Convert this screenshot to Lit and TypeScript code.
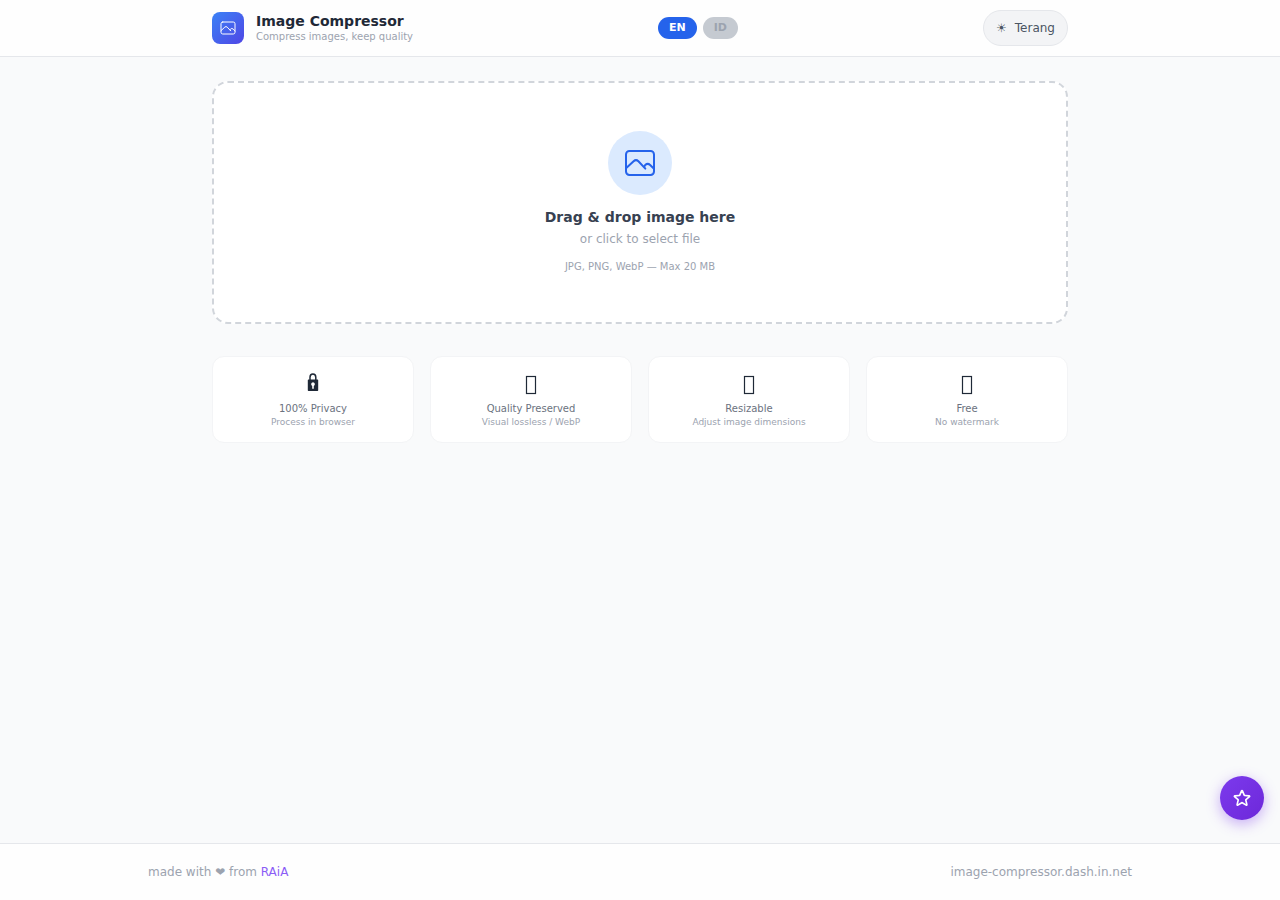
import { LitElement, html, svg, css } from "lit";
import { customElement, state } from "lit/decorators.js";

const photo = svg`
  <rect x="1.5" y="3" width="21" height="18" rx="2.6" />
  <path d="M1.5 16l5.7-5.3a2.6 2.6 0 0 1 3.6 0l5.2 5.5M15.5 15.6c-.5-.8-.3-1.4.4-2.1a2.8 2.8 0 0 1 3.7 0l2.9 2.8" />
`;

const lock = svg`
  <path d="M7 11.5V8.3a2.9 3.3 0 0 1 5.8 0v3.2" stroke-width="1.5" />
  <path fill="currentColor" stroke="none" fill-rule="evenodd"
    d="M5.5 10.5h9a.7.7 0 0 1 .7.7v10.1a.7.7 0 0 1-.7.7h-9a.7.7 0 0 1-.7-.7v-10.1a.7.7 0 0 1 .7-.7zM10 13.300a1.900 1.900 0 0 0-.8 3.600v2.800h1.600v-2.800a1.900 1.900 0 0 0-.8-3.600z" />
`;

const box = svg`<rect x="5.5" y="7.5" width="9" height="17" stroke-width="1.2" stroke-linejoin="miter" />`;

const features = [
  { icon: lock, title: "100% Privacy", note: "Process in browser" },
  { icon: box, title: "Quality Preserved", note: "Visual lossless / WebP" },
  { icon: box, title: "Resizable", note: "Adjust image dimensions" },
  { icon: box, title: "Free", note: "No watermark" },
];

@customElement("app-root")
export class AppRoot extends LitElement {
  @state() private lang = "EN";

  static styles = css`
    :host {
      display: flex;
      flex-direction: column;
      min-height: 100vh;
      background: #f9fafb;
      color: #1f2937;
      font-family: "DejaVu Sans", sans-serif;
      font-size: 12px;
      line-height: 16px;
    }
    * { box-sizing: border-box; }
    p, h1, h2, h3 { margin: 0; }
    button { font: inherit; cursor: pointer; }
    svg { fill: none; stroke: currentColor; stroke-width: 1.5; stroke-linecap: round; stroke-linejoin: round; }
    header { background: #fefefe; border-bottom: 1px solid #e5e7eb; }
    .bar {
      display: flex;
      align-items: center;
      justify-content: space-between;
      max-width: 888px;
      margin: 0 auto;
      padding: 10px 16px;
    }
    .brand { display: flex; align-items: center; gap: 12px; }
    .logo {
      display: grid;
      place-items: center;
      width: 32px;
      height: 32px;
      border-radius: 8px;
      color: #fff;
      background: linear-gradient(135deg, #3b82f6, #4f46e5);
    }
    .logo svg { width: 16px; height: 16px; }
    h1 { font-size: 14px; line-height: 18px; }
    .tagline { font-size: 10px; line-height: 14px; color: #9ca3af; }
    .langs { display: flex; gap: 6px; }
    .lang {
      padding: 3px 11px;
      border: 0;
      border-radius: 11px;
      font-size: 11px;
      font-weight: 700;
      background: #c5cad1;
      color: #9ca3af;
    }
    .lang.active { background: #2563eb; color: #fff; }
    .theme {
      display: flex;
      align-items: center;
      gap: 8px;
      padding: 9px 12px;
      border: 1px solid #e5e7eb;
      border-radius: 18px;
      background: #f3f4f6;
      color: #4b5563;
    }
    main { flex: 1; width: 100%; max-width: 888px; margin: 0 auto; padding: 24px 16px; }
    .drop {
      display: flex;
      flex-direction: column;
      align-items: center;
      width: 100%;
      padding: 48px;
      border: 2px dashed #d1d5db;
      border-radius: 16px;
      background: #fff;
      color: #9ca3af;
    }
    .badge {
      display: grid;
      place-items: center;
      width: 64px;
      height: 64px;
      margin-bottom: 12px;
      border-radius: 50%;
      background: #dbeafe;
      color: #2563eb;
    }
    .badge svg { width: 32px; height: 32px; }
    .lead { font-size: 14px; line-height: 20px; font-weight: 700; color: #374151; }
    .hint { margin-top: 4px; }
    .formats { margin-top: 12px; font-size: 10px; line-height: 15px; }
    .features { display: grid; grid-template-columns: repeat(4, 1fr); gap: 16px; margin-top: 32px; }
    .card {
      padding: 12px 12px 13px;
      border: 1px solid #f3f4f6;
      border-radius: 12px;
      background: #fff;
      text-align: center;
    }
    .glyph { display: block; width: 20px; height: 28px; margin: 0 auto 4px; }
    h3 { font-size: 10px; line-height: 15px; font-weight: 400; color: #6b7280; }
    .note { font-size: 9px; line-height: 13px; color: #9ca3af; }
    footer { background: #fefefe; border-top: 1px solid #e5e7eb; color: #9ca3af; }
    .foot {
      display: flex;
      justify-content: space-between;
      max-width: 1024px;
      margin: 0 auto;
      padding: 20px;
    }
    a { color: #8b5cf6; text-decoration: none; }
    .fab {
      position: fixed;
      right: 16px;
      bottom: 80px;
      display: grid;
      place-items: center;
      width: 44px;
      height: 44px;
      padding: 0;
      border: 0;
      border-radius: 50%;
      color: #fff;
      background: linear-gradient(135deg, #7c3aed, #6d28d9);
      box-shadow: 0 4px 14px rgba(124, 58, 237, 0.4);
    }
    .fab svg { width: 20px; height: 20px; stroke-width: 2; }
  `;

  render() {
    return html`
      <header>
        <div class="bar">
          <div class="brand">
            <div class="logo"><svg viewBox="0 0 24 24" aria-hidden="true">${photo}</svg></div>
            <div>
              <h1>Image Compressor</h1>
              <p class="tagline">Compress images, keep quality</p>
            </div>
          </div>
          <div class="langs">
            ${["EN", "ID"].map(
              (l) => html`<button class="lang ${this.lang === l ? "active" : ""}" @click=${() => (this.lang = l)}>${l}</button>`
            )}
          </div>
          <button class="theme"><span>☀</span><span>Terang</span></button>
        </div>
      </header>
      <main>
        <button class="drop">
          <span class="badge"><svg viewBox="0 0 24 24" aria-hidden="true">${photo}</svg></span>
          <span class="lead">Drag &amp; drop image here</span>
          <span class="hint">or click to select file</span>
          <span class="formats">JPG, PNG, WebP — Max 20 MB</span>
        </button>
        <section class="features">
          ${features.map(
            (f) => html`<article class="card">
              <svg class="glyph" viewBox="0 0 20 28" aria-hidden="true">${f.icon}</svg>
              <h3>${f.title}</h3>
              <p class="note">${f.note}</p>
            </article>`
          )}
        </section>
      </main>
      <footer>
        <div class="foot">
          <span>made with ❤ from <a href="#">RAiA</a></span>
          <span>image-compressor.dash.in.net</span>
        </div>
      </footer>
      <button class="fab" aria-label="Favourite">
        <svg viewBox="0 0 24 24" aria-hidden="true">
          <path d="M11.48 3.499a.562.562 0 0 1 1.04 0l2.125 5.111a.563.563 0 0 0 .475.345l5.518.442c.499.04.701.663.321.988l-4.204 3.602a.563.563 0 0 0-.182.557l1.285 5.385a.562.562 0 0 1-.84.61l-4.725-2.885a.563.563 0 0 0-.586 0L6.982 20.54a.562.562 0 0 1-.84-.61l1.285-5.386a.562.562 0 0 0-.182-.557l-4.204-3.602a.563.563 0 0 1 .321-.988l5.518-.442a.563.563 0 0 0 .475-.345L11.48 3.5z" />
        </svg>
      </button>
    `;
  }
}
